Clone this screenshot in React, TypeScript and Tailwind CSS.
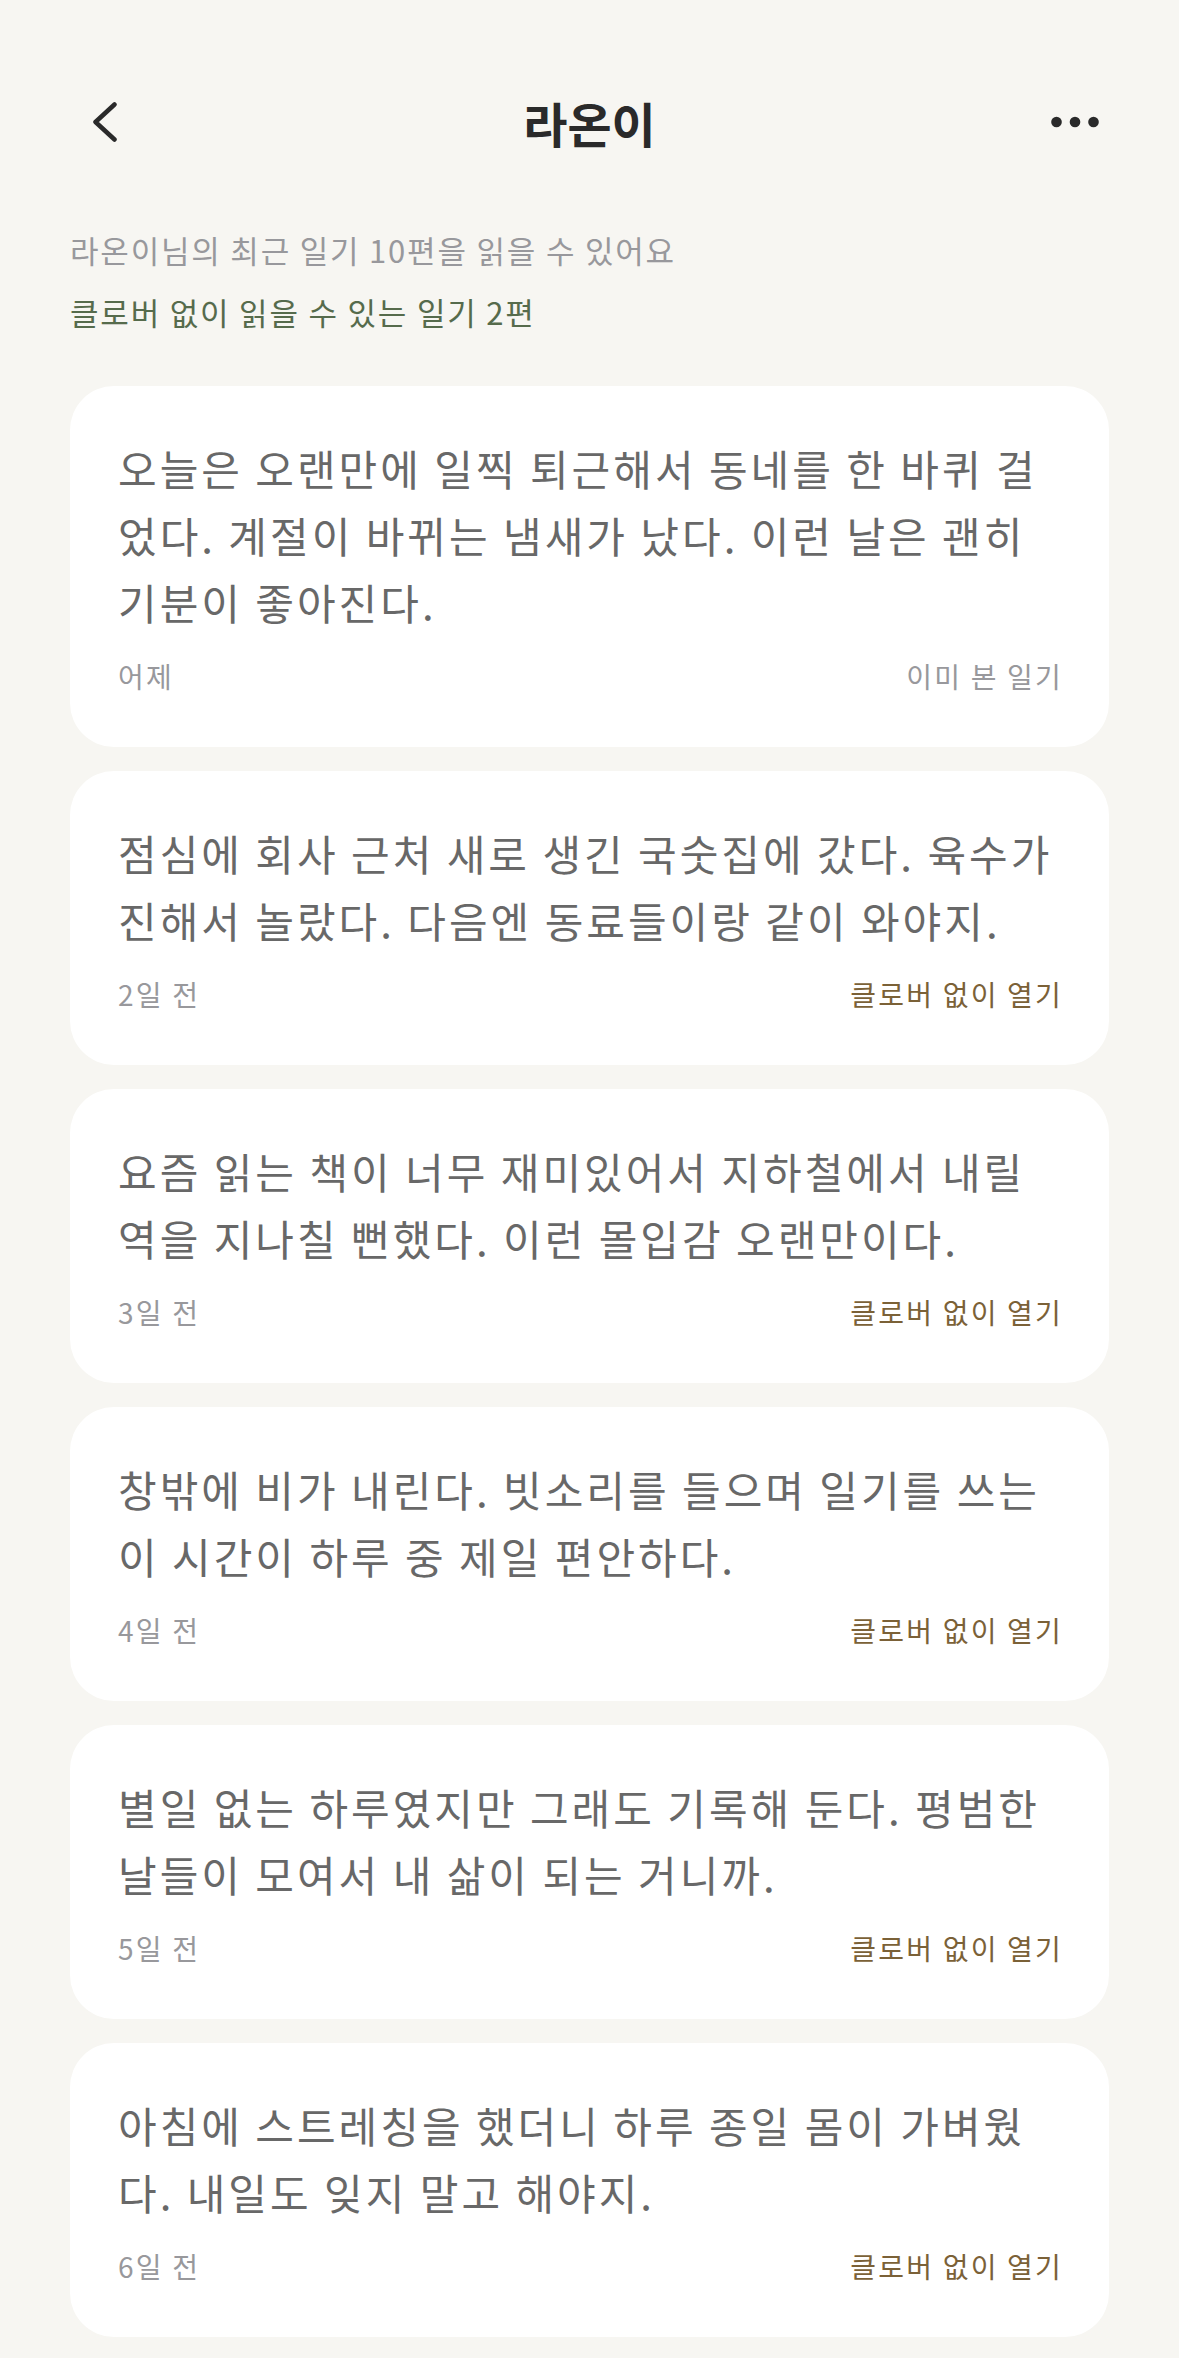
import React from 'react';

type Diary = {
  lines: string[];
  date: string;
  seen?: boolean;
};

const diaries: Diary[] = [
  {
    lines: [
      '오늘은 오랜만에 일찍 퇴근해서 동네를 한 바퀴 걸',
      '었다. 계절이 바뀌는 냄새가 났다. 이런 날은 괜히',
      '기분이 좋아진다.'
    ],
    date: '어제',
    seen: true
  },
  {
    lines: [
      '점심에 회사 근처 새로 생긴 국숫집에 갔다. 육수가',
      '진해서 놀랐다. 다음엔 동료들이랑 같이 와야지.'
    ],
    date: '2일 전'
  },
  {
    lines: [
      '요즘 읽는 책이 너무 재미있어서 지하철에서 내릴',
      '역을 지나칠 뻔했다. 이런 몰입감 오랜만이다.'
    ],
    date: '3일 전'
  },
  {
    lines: [
      '창밖에 비가 내린다. 빗소리를 들으며 일기를 쓰는',
      '이 시간이 하루 중 제일 편안하다.'
    ],
    date: '4일 전'
  },
  {
    lines: [
      '별일 없는 하루였지만 그래도 기록해 둔다. 평범한',
      '날들이 모여서 내 삶이 되는 거니까.'
    ],
    date: '5일 전'
  },
  {
    lines: [
      '아침에 스트레칭을 했더니 하루 종일 몸이 가벼웠',
      '다. 내일도 잊지 말고 해야지.'
    ],
    date: '6일 전'
  }
];

const BackIcon = () => (
  <svg width="24" height="40" viewBox="0 0 24 40" fill="none">
    <polyline
      points="21.5,2.5 2.5,20 21.5,37.5"
      stroke="#2a2a2a"
      strokeWidth="4.5"
      strokeLinecap="round"
      strokeLinejoin="round"
    />
  </svg>
);

const MoreIcon = () => (
  <svg width="48" height="12" viewBox="0 0 48 12" fill="#2a2a2a">
    <circle cx="5.5" cy="6" r="5.3" />
    <circle cx="24" cy="6" r="5.3" />
    <circle cx="42.5" cy="6" r="5.3" />
  </svg>
);

const DiaryCard = ({ diary }: { diary: Diary }) => (
  <div className="bg-white rounded-[44px] px-[48px] pt-[48px] pb-[51px] flex flex-col gap-[21px]">
    <p className="text-[42px] leading-[67px] tracking-[3px] text-[#686868] whitespace-nowrap">
      {diary.lines.map((line, i) => (
        <React.Fragment key={i}>
          {i > 0 && <br />}
          {line}
        </React.Fragment>
      ))}
    </p>
    <div className="flex items-center justify-between text-[28px] leading-[40px] tracking-[2.2px]">
      <span className="text-[#98989c]">{diary.date}</span>
      {diary.seen ? (
        <span className="text-[#98989c] -mr-[2px]">이미 본 일기</span>
      ) : (
        <span className="text-[#7b6137] -mr-[2px]">클로버 없이 열기</span>
      )}
    </div>
  </div>
);

export default function App() {
  return (
    <div
      className="min-h-screen bg-[#f7f6f2] pt-[74px] pb-[20px]"
      style={{ fontFamily: '"Noto Sans CJK KR", "Noto Sans", sans-serif' }}
    >
      {/* header */}
      <div className="h-[96px] grid grid-cols-[1fr_auto_1fr] items-center px-[80px]">
        <div className="pl-[13px] flex items-center">
          <BackIcon />
        </div>
        <h1 className="text-[48px] leading-none font-bold text-[#2a2a2a]">라온이</h1>
        <div className="flex justify-end">
          <MoreIcon />
        </div>
      </div>

      <div className="px-[70px]">
        <div className="mt-[60px] flex flex-col gap-[22px] text-[31px] leading-[40px] tracking-[1.8px]">
          <p className="text-[#98989c]">라온이님의 최근 일기 10편을 읽을 수 있어요</p>
          <p className="text-[#566b4c]">클로버 없이 읽을 수 있는 일기 2편</p>
        </div>

        <div className="mt-[54px] flex flex-col gap-[24px]">
          {diaries.map((d, i) => (
            <DiaryCard key={i} diary={d} />
          ))}
        </div>
      </div>
    </div>
  );
}
